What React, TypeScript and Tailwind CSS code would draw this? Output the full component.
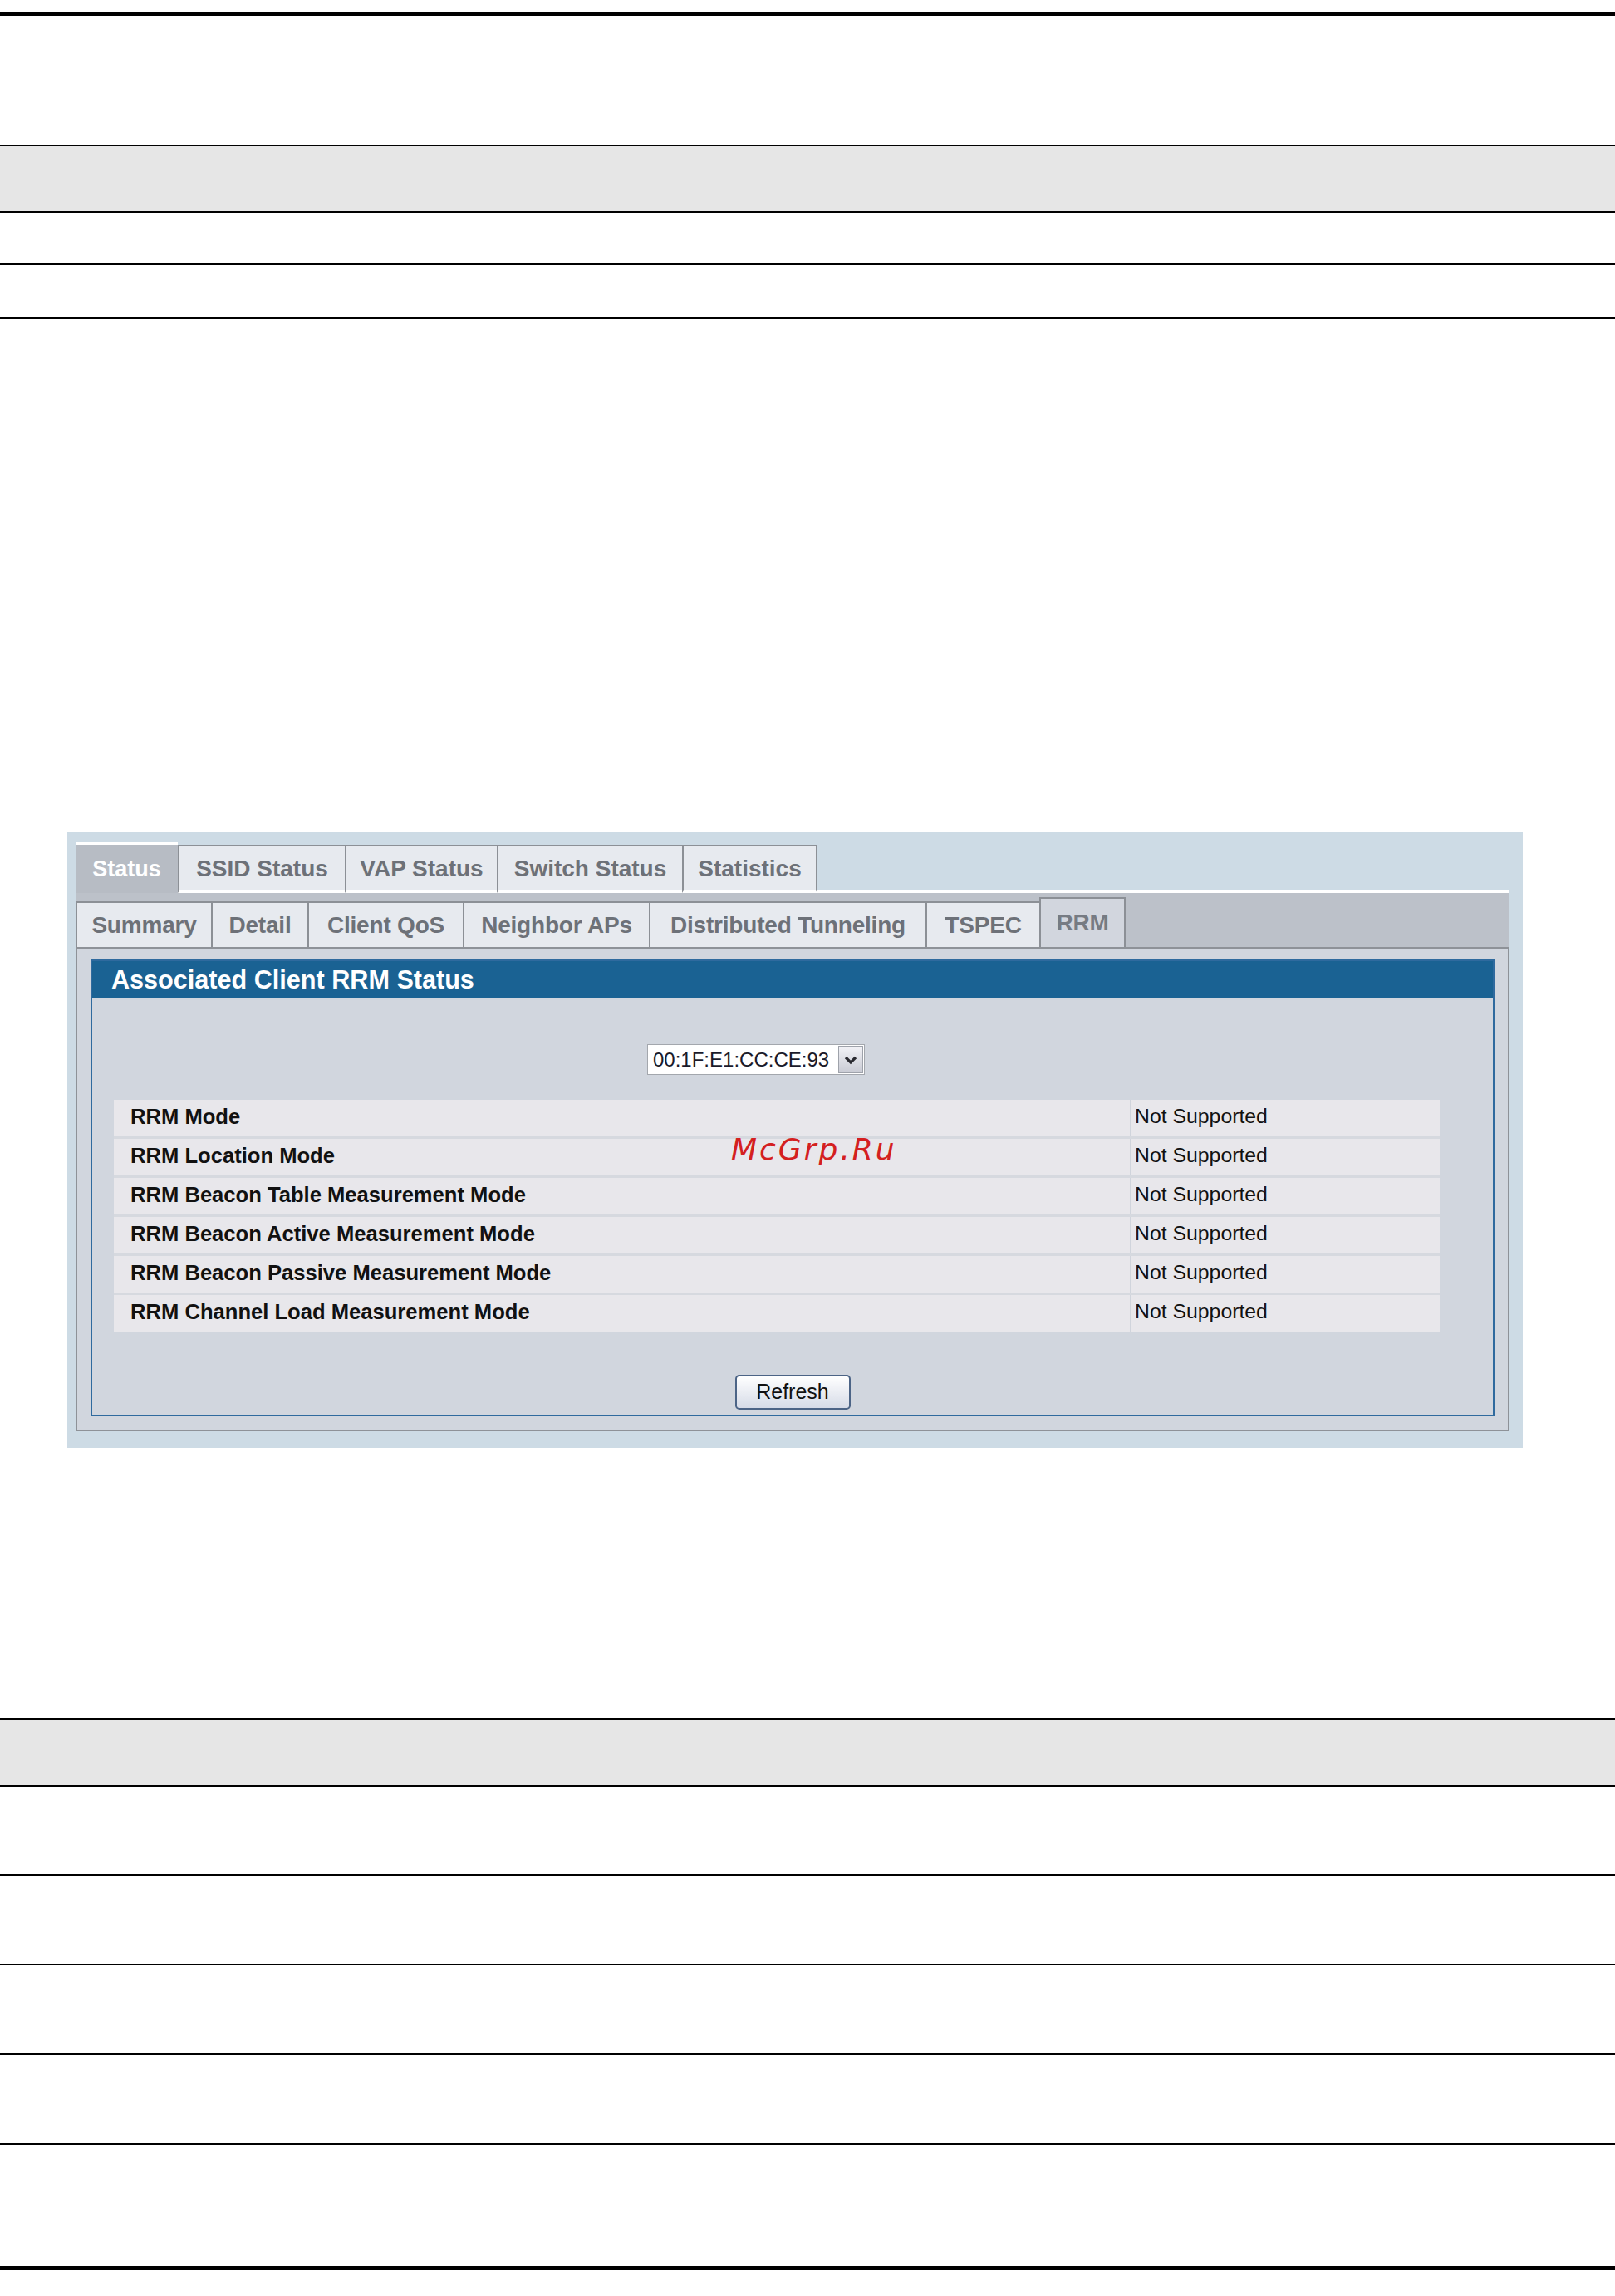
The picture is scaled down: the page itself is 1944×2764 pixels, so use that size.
const topTabs = [
  { label: "Status", w: "w-[123px]", active: true },
  { label: "SSID Status", w: "w-[201px]" },
  { label: "VAP Status", w: "w-[183px]" },
  { label: "Switch Status", w: "w-[223px]" },
  { label: "Statistics", w: "w-[163px]", last: true },
];

const subTabs = [
  { label: "Summary", w: "w-[163px]" },
  { label: "Detail", w: "w-[116px]" },
  { label: "Client QoS", w: "w-[187px]" },
  { label: "Neighbor APs", w: "w-[224px]" },
  { label: "Distributed Tunneling", w: "w-[333px]" },
  { label: "TSPEC", w: "w-[137px]" },
  { label: "RRM", w: "w-[104px]", active: true },
];

const rows = [
  "RRM Mode",
  "RRM Location Mode",
  "RRM Beacon Table Measurement Mode",
  "RRM Beacon Active Measurement Mode",
  "RRM Beacon Passive Measurement Mode",
  "RRM Channel Load Measurement Mode",
];

function TopTabs() {
  return (
    <div className="flex items-end h-[61px]">
      {topTabs.map((t) =>
        t.active ? (
          <div
            key={t.label}
            className={`${t.w} h-[61px] bg-[#b7bcc4] border-t-[3px] border-white flex items-center justify-center text-[27px] font-bold text-white`}
          >
            {t.label}
          </div>
        ) : (
          <div
            key={t.label}
            className={`${t.w} h-[58px] bg-[#e7eaef] border-t-2 border-l-2 ${t.last ? "border-r-2" : ""} border-[#8c9096] border-b-[3px] border-b-white flex items-center justify-center text-[28px] font-bold text-[#6d7178]`}
          >
            {t.label}
          </div>
        )
      )}
      <div className="flex-1 h-[3px] bg-white" />
    </div>
  );
}

function SubTabs() {
  return (
    <div className="h-[65px] bg-[#bcc1c9] flex items-end">
      {subTabs.map((t) => (
        <div
          key={t.label}
          className={`${t.w} ${t.active ? "h-[60px] bg-[#d2d6de] border-r-2 text-[#767b83]" : "h-[55px] bg-[#e7eaef] text-[#6d7178]"} border-t-2 border-l-2 border-[#8c9096] flex items-center justify-center text-[28px] tracking-[-0.2px] font-bold`}
        >
          {t.label}
        </div>
      ))}
    </div>
  );
}

function MacSelect() {
  return (
    <div className="ml-[668px] flex items-center h-[37px] w-[262px] bg-white border border-[#a3a7ad]">
      <div className="flex-1 pl-[6px] text-[24px] text-[#1a1a2a] leading-none">00:1F:E1:CC:CE:93</div>
      <div className="w-[30px] h-[33px] mr-[1px] bg-gradient-to-b from-[#f2f2f6] to-[#c9cbd4] border border-[#9ea2aa] flex items-center justify-center">
        <svg width="16" height="12" viewBox="0 0 16 12">
          <path d="M2 3 L8 9 L14 3" fill="none" stroke="#2a2a30" strokeWidth="3.2" />
        </svg>
      </div>
    </div>
  );
}

function RrmTable() {
  return (
    <div className="ml-[26px] w-[1596px] flex flex-col gap-[3px] bg-[#d6d9df]">
      {rows.map((r) => (
        <div key={r} className="flex h-[44px] bg-[#e8e7eb]">
          <div className="w-[1223px] pl-[20px] pb-[4px] flex items-center text-[25.6px] font-bold text-[#111]">{r}</div>
          <div className="flex-1 border-l-2 border-[#d0d4dc] pl-[4px] pb-[4px] flex items-center text-[24.8px] text-[#111]">
            Not Supported
          </div>
        </div>
      ))}
    </div>
  );
}

function StatusPanel() {
  return (
    <div className="ml-[81px] w-[1752px] h-[742px] bg-[#cddbe5] pl-[10px] pr-[16px] pt-[13px]">
      <TopTabs />
      <SubTabs />
      <div className="border-2 border-[#8e9298] bg-[#d1d6de] px-[16px] pt-[13px] pb-[16px]">
        <div className="border-2 border-[#2f6a9e] bg-[#d1d6de]">
          <div className="h-[45px] bg-[#1a6293] pl-[23px] flex items-center text-[30.6px] font-bold text-white">
            Associated Client RRM Status
          </div>
          <div className="pt-[55px] pb-[6px] flex flex-col">
            <MacSelect />
            <div className="mt-[30px]">
              <RrmTable />
            </div>
            <div className="mt-[52px] flex justify-center">
              <div className="w-[139px] h-[42px] rounded-[5px] border-2 border-[#4c6486] bg-gradient-to-b from-white to-[#d6dbe7] flex items-center justify-center text-[25px] text-[#111]">
                Refresh
              </div>
            </div>
          </div>
        </div>
      </div>
    </div>
  );
}

export default function App() {
  return (
    <div className="relative w-[1944px] h-[2764px] bg-white overflow-hidden" style={{ fontFamily: '"Liberation Sans", Arial, sans-serif' }}>
      <div className="h-[15px]" />
      <div className="h-[4px] bg-black" />
      <div className="h-[155px]" />
      <div className="h-[82px] bg-[#e6e6e6] border-y-2 border-black" />
      <div className="h-[63px] border-b-2 border-black" />
      <div className="h-[65px] border-b-2 border-black" />
      <div className="h-[617px]" />

      <StatusPanel />

      <div className="h-[325px]" />
      <div className="h-[83px] bg-[#e6e6e6] border-y-2 border-black" />
      <div className="h-[107px] border-b-2 border-black" />
      <div className="h-[108px] border-b-2 border-black" />
      <div className="h-[108px] border-b-2 border-black" />
      <div className="h-[108px] border-b-2 border-black" />
      <div className="h-[146px]" />
      <div className="h-[5px] bg-black" />

      {/* watermark over the screenshot */}
      <div
        className="absolute left-[880px] top-[1366px] text-[36px] leading-none italic tracking-[3px] text-[#d42020]"
        style={{ fontFamily: '"DejaVu Sans", sans-serif' }}
      >
        McGrp.Ru
      </div>
    </div>
  );
}
